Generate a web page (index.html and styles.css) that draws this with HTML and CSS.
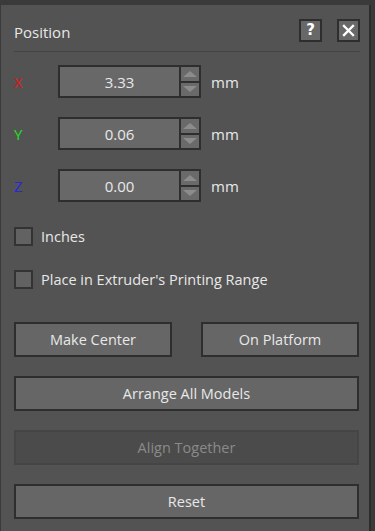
FILE: index.html
```html
<!DOCTYPE html>
<html lang="en">
<head>
  <meta charset="UTF-8">
  <meta name="viewport" content="width=device-width, initial-scale=1.0">
  <title>Position</title>
  <link rel="stylesheet" href="styles.css">
</head>
<body>
  <div class="panel">
    <div class="header">
      <span class="title">Position</span>
      <div class="header-btns">
        <button class="icon-btn">?</button>
        <button class="icon-btn">
          <svg width="19" height="19" viewBox="0 0 19 19">
            <path d="M5 5 L14 14 M14 5 L5 14" stroke="#fff" stroke-width="2.3" stroke-linecap="square" fill="none"/>
          </svg>
        </button>
      </div>
    </div>

    <div class="fields">
      <div class="field">
        <span class="axis x">X</span>
        <div class="input">3.33</div>
        <div class="spin">
          <div class="spin-btn"><span class="arrow up"></span></div>
          <div class="spin-btn"><span class="arrow down"></span></div>
        </div>
        <span class="unit">mm</span>
      </div>
      <div class="field">
        <span class="axis y">Y</span>
        <div class="input">0.06</div>
        <div class="spin">
          <div class="spin-btn"><span class="arrow up"></span></div>
          <div class="spin-btn"><span class="arrow down"></span></div>
        </div>
        <span class="unit">mm</span>
      </div>
      <div class="field">
        <span class="axis z">Z</span>
        <div class="input">0.00</div>
        <div class="spin">
          <div class="spin-btn"><span class="arrow up"></span></div>
          <div class="spin-btn"><span class="arrow down"></span></div>
        </div>
        <span class="unit">mm</span>
      </div>
    </div>

    <div class="checks">
      <label class="check"><span class="box"></span>Inches</label>
      <label class="check"><span class="box"></span>Place in Extruder's Printing Range</label>
    </div>

    <div class="actions">
      <div class="pair">
        <button class="btn">Make Center</button>
        <button class="btn">On Platform</button>
      </div>
      <button class="btn">Arrange All Models</button>
      <button class="btn disabled">Align Together</button>
      <button class="btn">Reset</button>
    </div>
  </div>
</body>
</html>
```

FILE: styles.css
```css
body {
  margin: 0;
  background-color: #3a3a3a;
  font-family: "Open Sans", "Noto Sans", sans-serif;
  font-size: 14.5px;
  color: #e8e8e8;
}
.panel {
  margin: 5px 0 0 1px;
  width: 370px;
  height: 526px;
  box-sizing: border-box;
  padding: 0 9px 0 13px;
  background-color: #535353;
  border-right: 2px solid #2c2c2c;
}
.header {
  display: flex;
  align-items: center;
  justify-content: space-between;
  padding: 14px 0 9px 0;
  border-bottom: 1px solid #444;
}
.title {
  font-size: 15px;
  margin-top: 2px;
}
.header-btns {
  display: flex;
  gap: 15px;
}
.icon-btn {
  width: 23px;
  height: 23px;
  padding: 0;
  background-color: #686868;
  border: 2px solid #2e2e2e;
  color: #fff;
  font-family: "DejaVu Sans", sans-serif;
  font-weight: bold;
  font-size: 15px;
  line-height: 17px;
  display: flex;
  align-items: center;
  justify-content: center;
}
.fields {
  display: flex;
  flex-direction: column;
  gap: 19px;
  margin-top: 13px;
}
.field {
  display: flex;
  align-items: center;
  height: 33px;
}
.axis {
  width: 44px;
  font-size: 15px;
}
.axis.x { color: #e01818; }
.axis.y { color: #20e020; }
.axis.z { color: #2828d8; }
.input {
  width: 121px;
  height: 33px;
  box-sizing: border-box;
  background-color: #686868;
  border: 2px solid #2e2e2e;
  border-right: none;
  display: flex;
  align-items: center;
  justify-content: center;
  font-size: 15px;
}
.spin {
  display: flex;
  flex-direction: column;
  width: 22px;
  height: 33px;
  box-sizing: border-box;
  border: 2px solid #2e2e2e;
  background-color: #2e2e2e;
  gap: 2px;
}
.spin-btn {
  flex: 1;
  background-color: #6a6a6a;
  display: flex;
  align-items: center;
  justify-content: center;
}
.arrow {
  width: 0;
  height: 0;
  border-left: 7px solid transparent;
  border-right: 7px solid transparent;
}
.arrow.up { border-bottom: 6px solid #8c8c8c; }
.arrow.down { border-top: 6px solid #8c8c8c; }
.unit {
  margin-left: 10px;
  font-size: 15px;
}
.checks {
  display: flex;
  flex-direction: column;
  gap: 24px;
  margin-top: 25px;
}
.check {
  display: flex;
  align-items: center;
  height: 19px;
}
.box {
  width: 19px;
  height: 19px;
  box-sizing: border-box;
  background-color: #626262;
  border: 2px solid #333;
  margin-right: 8px;
}
.actions {
  display: flex;
  flex-direction: column;
  gap: 19px;
  margin-top: 33px;
  width: 345px;
}
.pair {
  display: flex;
  justify-content: space-between;
}
.pair .btn {
  width: 158px;
}
.btn {
  height: 35px;
  background-color: #666;
  border: 2px solid #2e2e2e;
  color: #e8e8e8;
  font-family: "Open Sans", "Noto Sans", sans-serif;
  font-size: 14.5px;
  padding: 0;
}
.btn.disabled {
  background-color: #4b4b4b;
  border-color: #454545;
  color: #8a8a8a;
}
```
